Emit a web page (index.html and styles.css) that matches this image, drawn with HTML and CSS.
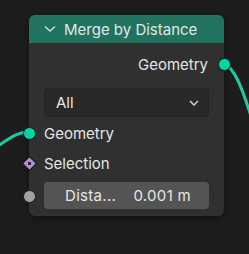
FILE: index.html
```html
<!DOCTYPE html>
<html lang="en">
<head>
    <meta charset="UTF-8">
    <title>Merge by Distance</title>
    <link rel="stylesheet" href="styles.css">
</head>
<body>
    <div class="canvas">
        <svg class="wires" width="249" height="254">
            <path d="M 223 64 C 234 66, 242 88, 251 116" stroke="#1fc99f" stroke-width="3" fill="none"/>
            <path d="M -2 146 C 10 138, 17 132, 29 132" stroke="#1fc99f" stroke-width="3" fill="none"/>
        </svg>

        <div class="node">
            <div class="node-header">
                <svg class="collapse" width="12" height="8" viewBox="0 0 12 8">
                    <path d="M 1 1.5 L 6 6 L 11 1.5" stroke="#dcdcdc" stroke-width="1.4" fill="none"/>
                </svg>
                <span>Merge by Distance</span>
            </div>
            <div class="node-body">
                <div class="row row-out">
                    <span>Geometry</span>
                    <i class="socket socket-geo socket-right"></i>
                </div>
                <div class="dropdown">
                    <span>All</span>
                    <svg width="10" height="6" viewBox="0 0 10 6">
                        <path d="M 1 1 L 5 5 L 9 1" stroke="#d8d8d8" stroke-width="1.4" fill="none"/>
                    </svg>
                </div>
                <div class="row">
                    <i class="socket socket-geo socket-left"></i>
                    <span>Geometry</span>
                </div>
                <div class="row">
                    <i class="socket socket-field socket-left"></i>
                    <span>Selection</span>
                </div>
                <div class="row row-field">
                    <i class="socket socket-float socket-left"></i>
                    <div class="number">
                        <span>Dista...</span>
                        <span>0.001 m</span>
                    </div>
                </div>
            </div>
        </div>
    </div>
</body>
</html>
```

FILE: styles.css
```css
body {
    margin: 0;
    background-color: #1d1d1d;
    font-family: Inter, "Noto Sans", sans-serif;
    color: #e6e6e6;
}
.canvas {
    position: relative;
    width: 249px;
    height: 254px;
    overflow: hidden;
    padding: 15px 0 0 29px;
    box-sizing: border-box;
}
.wires {
    position: absolute;
    top: 0;
    left: 0;
}
.node {
    position: relative;
    width: 195px;
    border-radius: 6px;
    background-color: #303030;
    box-shadow: 0 2px 8px rgba(0, 0, 0, 0.45);
}
.node-header {
    height: 28px;
    display: flex;
    align-items: center;
    gap: 8px;
    padding-left: 15px;
    background-color: #1f735f;
    border-radius: 6px 6px 0 0;
    font-size: 15px;
}
.node-body {
    display: flex;
    flex-direction: column;
    padding: 6px 0 7px;
}
.row {
    position: relative;
    height: 30px;
    display: flex;
    align-items: center;
    padding-left: 15px;
    font-size: 15px;
}
.row-out {
    justify-content: flex-end;
    padding: 0 16px 0 0;
}
.dropdown {
    margin: 9px 15px 1px;
    height: 27px;
    display: flex;
    align-items: center;
    justify-content: space-between;
    padding: 0 9px 0 11px;
    background-color: #282828;
    border: 1px solid #242424;
    border-radius: 4px;
    font-size: 15px;
}
.row-field {
    margin-top: 4px;
    height: 27px;
}
.number {
    flex: 1;
    height: 27px;
    margin-right: 15px;
    display: flex;
    align-items: center;
    justify-content: space-between;
    padding: 0 18px 0 21px;
    background-color: #545454;
    border-radius: 4px;
    font-size: 15px;
    letter-spacing: 0.3px;
}
.socket {
    position: absolute;
    top: 50%;
    width: 11px;
    height: 11px;
    margin-top: -6px;
    border-radius: 50%;
    border: 1px solid #1a1a1a;
}
.socket-left {
    left: -6px;
}
.socket-right {
    right: -7px;
}
.socket-geo {
    background-color: #00d6a3;
}
.socket-float {
    background-color: #a1a1a1;
}
.socket-field {
    width: 9px;
    height: 9px;
    margin-top: -5px;
    left: -5px;
    border-radius: 1px;
    transform: rotate(45deg);
    background: radial-gradient(circle, #2a1f33 1.6px, #b28fd6 2px);
}
```
